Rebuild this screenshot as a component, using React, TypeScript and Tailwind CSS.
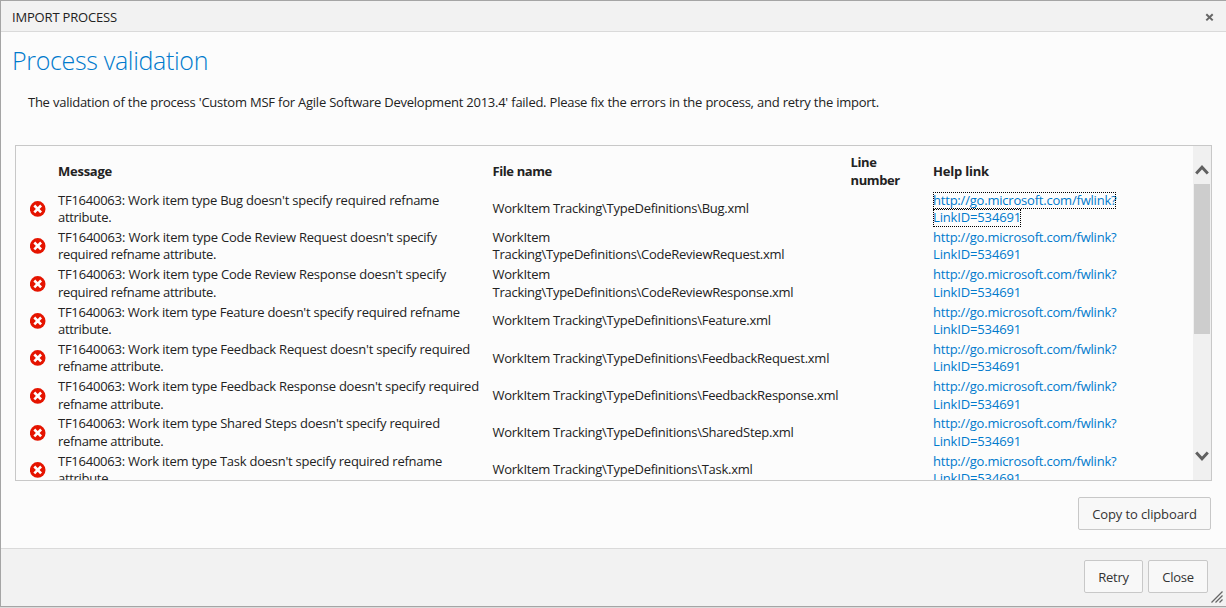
type Line = { text: string; tracking?: string };
type Row = { message: Line[]; file: Line[] };

const ROWS: Row[] = [
  {
    message: [
      { text: "TF1640063: Work item type Bug doesn't specify required refname", tracking: "tracking-[-0.24px]" },
      { text: "attribute.", tracking: "tracking-[-0.31px]" },
    ],
    file: [{ text: "WorkItem Tracking\\TypeDefinitions\\Bug.xml" }],
  },
  {
    message: [
      { text: "TF1640063: Work item type Code Review Request doesn't specify", tracking: "tracking-[-0.21px]" },
      { text: "required refname attribute.", tracking: "tracking-[-0.33px]" },
    ],
    file: [{ text: "WorkItem" }, { text: "Tracking\\TypeDefinitions\\CodeReviewRequest.xml" }],
  },
  {
    message: [
      { text: "TF1640063: Work item type Code Review Response doesn't specify", tracking: "tracking-[-0.21px]" },
      { text: "required refname attribute.", tracking: "tracking-[-0.33px]" },
    ],
    file: [{ text: "WorkItem" }, { text: "Tracking\\TypeDefinitions\\CodeReviewResponse.xml" }],
  },
  {
    message: [
      { text: "TF1640063: Work item type Feature doesn't specify required refname", tracking: "tracking-[-0.26px]" },
      { text: "attribute.", tracking: "tracking-[-0.31px]" },
    ],
    file: [{ text: "WorkItem Tracking\\TypeDefinitions\\Feature.xml" }],
  },
  {
    message: [
      { text: "TF1640063: Work item type Feedback Request doesn't specify required", tracking: "tracking-[-0.235px]" },
      { text: "refname attribute.", tracking: "tracking-[-0.33px]" },
    ],
    file: [{ text: "WorkItem Tracking\\TypeDefinitions\\FeedbackRequest.xml" }],
  },
  {
    message: [
      { text: "TF1640063: Work item type Feedback Response doesn't specify required", tracking: "tracking-[-0.24px]" },
      { text: "refname attribute.", tracking: "tracking-[-0.33px]" },
    ],
    file: [{ text: "WorkItem Tracking\\TypeDefinitions\\FeedbackResponse.xml" }],
  },
  {
    message: [
      { text: "TF1640063: Work item type Shared Steps doesn't specify required", tracking: "tracking-[-0.24px]" },
      { text: "refname attribute.", tracking: "tracking-[-0.33px]" },
    ],
    file: [{ text: "WorkItem Tracking\\TypeDefinitions\\SharedStep.xml" }],
  },
  {
    message: [
      { text: "TF1640063: Work item type Task doesn't specify required refname", tracking: "tracking-[-0.25px]" },
      { text: "attribute.", tracking: "tracking-[-0.31px]" },
    ],
    file: [{ text: "WorkItem Tracking\\TypeDefinitions\\Task.xml" }],
  },
];

const COLUMNS = "grid grid-cols-[42px_434.5px_358px_82.5px_1fr] items-center";

function Lines({ lines }: { lines: Line[] }) {
  return (
    <div>
      {lines.map((line) => (
        <div key={line.text} className={`whitespace-nowrap ${line.tracking ?? "tracking-[-0.26px]"}`}>
          {line.text}
        </div>
      ))}
    </div>
  );
}

function ErrorIcon() {
  return (
    <svg className="ml-[13.5px] block size-4" viewBox="0 0 16 16" aria-hidden="true">
      <circle cx="7.7" cy="7.9" r="7.8" fill="#e51400" />
      <path d="M4.3 4.5l6.8 6.8M11.1 4.5l-6.8 6.8" stroke="#fff" strokeWidth="2.6" />
    </svg>
  );
}

function HelpLink({ focused }: { focused: boolean }) {
  const outline = focused ? "outline-1 -outline-offset-1 outline-dotted outline-black" : "";
  return (
    <a className="block text-[#007acc]">
      <span className={`block h-[17.5px] w-fit whitespace-nowrap tracking-[-0.205px] ${outline}`}>
        http://go.microsoft.com/fwlink?
      </span>
      <span className={`block h-[17.5px] w-fit whitespace-nowrap tracking-[-0.15px] ${outline}`}>LinkID=534691</span>
    </a>
  );
}

function Button({ children, className }: { children: string; className: string }) {
  return (
    <button
      className={`flex h-[33px] items-center justify-center rounded-[2px] border border-[#c8c8c8] bg-[#f8f8f8] pt-[2px] text-[#333] ${className}`}
    >
      {children}
    </button>
  );
}

export default function App() {
  return (
    <div className="h-[608px] w-[1226px] overflow-hidden bg-[#dcdcdc] font-['Open_Sans','Noto_Sans',sans-serif] text-[13px] leading-[17.5px] text-[#222]">
      <div className="relative flex h-[607px] flex-col border-t border-b border-l border-[#a5a5a5] bg-[#fcfcfc]">
        <header className="flex h-[31px] shrink-0 items-center justify-between border-b border-[#dadada] bg-[#f2f2f2] pr-[12px] pl-[11px]">
          <span className="pt-[4px] tracking-[-0.175px]">IMPORT PROCESS</span>
          <svg className="mt-[2px] size-[9px]" viewBox="0 0 9 9" aria-hidden="true">
            <path d="M1.3 1.2l6.4 6.2M7.7 1.2L1.3 7.4" stroke="#666" strokeWidth="2" />
          </svg>
        </header>

        <main className="flex min-h-0 flex-1 flex-col">
          <h1 className="mt-[11px] ml-[11px] h-[34px] text-[25px] leading-[34px] font-light tracking-[-0.33px] whitespace-nowrap text-[#007acc]">
            Process validation
          </h1>
          <p className="mt-[17px] ml-[27px] tracking-[-0.26px] [word-spacing:0.2px] whitespace-nowrap">
            The validation of the process 'Custom MSF for Agile Software Development 2013.4' failed. Please fix the
            errors in the process, and retry the import.
          </p>

          <div className="mt-[33.5px] ml-[14px] flex h-[336px] w-[1197px] shrink-0 overflow-hidden border border-[#c8c8c8]">
            <div className="min-w-0 flex-1 overflow-hidden">
              <div className={`${COLUMNS} h-[44.5px] pt-[7px] font-bold tracking-[-0.4px]`}>
                <span />
                <span className="tracking-[-0.25px]">Message</span>
                <span>File name</span>
                <span>
                  Line
                  <br />
                  number
                </span>
                <span className="tracking-[-0.2px]">Help link</span>
              </div>
              {ROWS.map((row, i) => (
                <div key={row.message[0].text} className={`${COLUMNS} h-[37.3px]`}>
                  <ErrorIcon />
                  <Lines lines={row.message} />
                  <Lines lines={row.file} />
                  <span />
                  <HelpLink focused={i === 0} />
                </div>
              ))}
            </div>
            <div className="flex w-[18px] shrink-0 flex-col items-center bg-[#f0f0f0]">
              <svg className="mt-[19px] h-[10px] w-[14px] shrink-0" viewBox="0 0 14 10" aria-hidden="true">
                <path d="M1.2 8.5L7 2.2l5.8 6.3" fill="none" stroke="#606060" strokeWidth="2.9" />
              </svg>
              <div className="mt-[9px] h-[150px] w-4 shrink-0 bg-[#cdcdcd]" />
              <svg className="mt-auto mb-[19px] h-[10px] w-[14px] shrink-0" viewBox="0 0 14 10" aria-hidden="true">
                <path d="M1.2 1.5L7 7.8l5.8-6.3" fill="none" stroke="#606060" strokeWidth="2.9" />
              </svg>
            </div>
          </div>

          <div className="mt-[16px] flex justify-end pr-[15px]">
            <Button className="w-[133px] tracking-[-0.13px]">Copy to clipboard</Button>
          </div>
        </main>

        <footer className="flex h-[58px] shrink-0 justify-end gap-[5px] border-t border-[#dadada] bg-[#f2f2f2] pt-[11px] pr-[18px]">
          <Button className="w-[59px] tracking-[-0.25px]">Retry</Button>
          <Button className="w-[60px] tracking-[-0.25px]">Close</Button>
        </footer>
        <svg className="absolute right-[3px] bottom-[3px] size-3" viewBox="0 0 12 12" aria-hidden="true">
          <path d="M0.5 11.5l11-11M4.5 11.5l7-7M8.5 11.5l3-3" stroke="#666" strokeWidth="1.3" />
        </svg>
      </div>
    </div>
  );
}
